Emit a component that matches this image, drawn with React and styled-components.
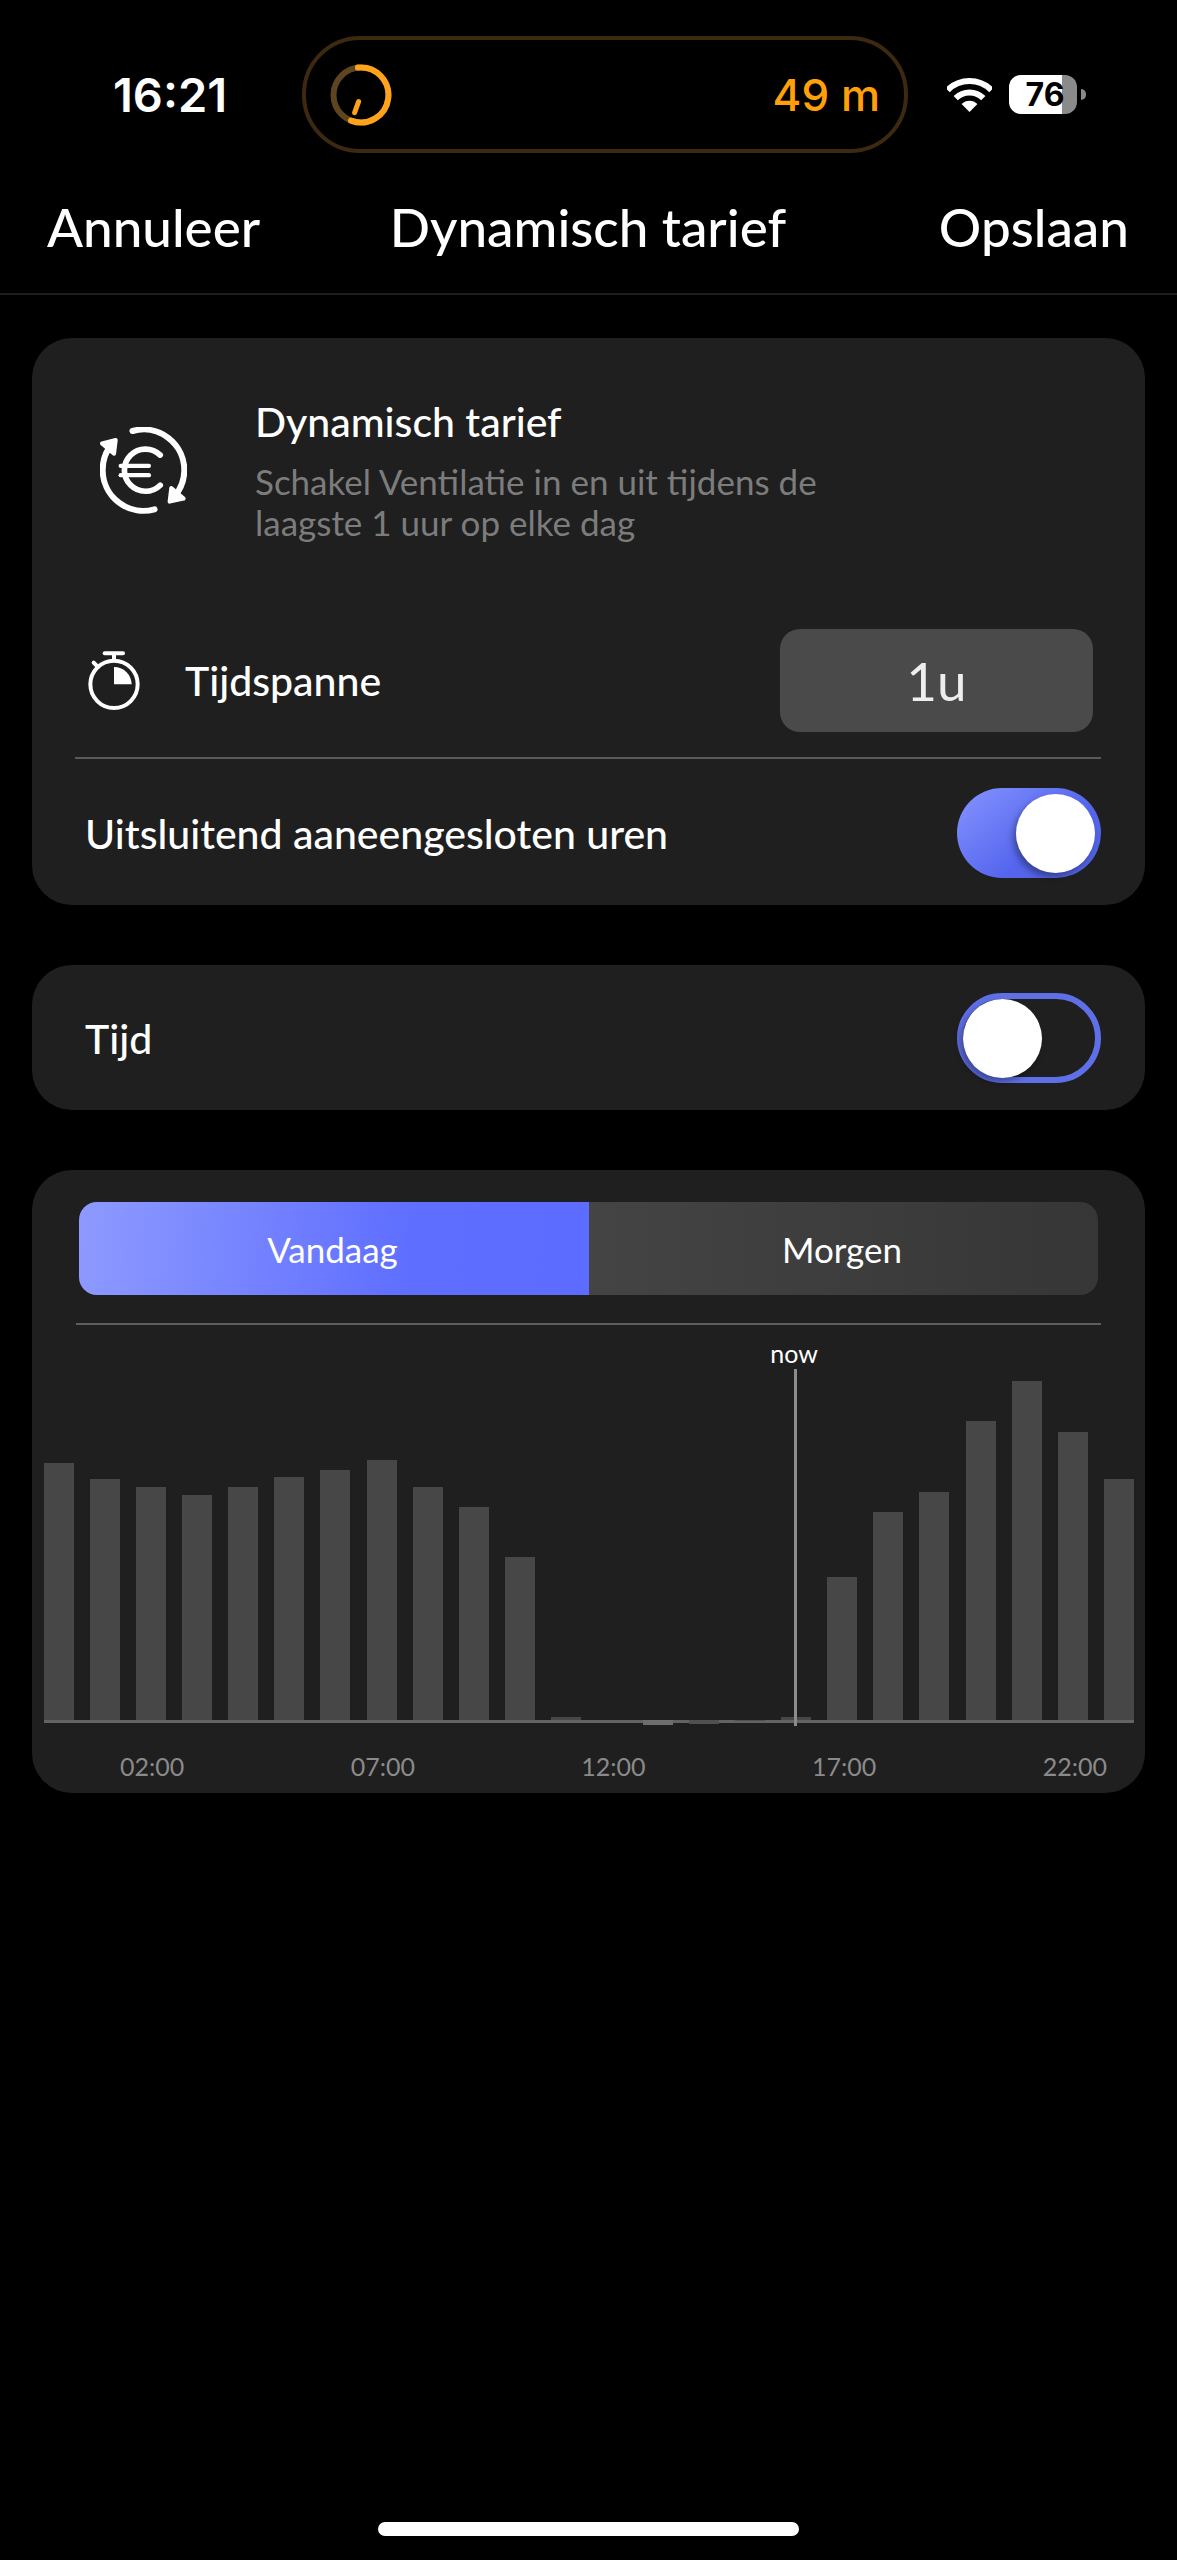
import React from "react";
import styled, { createGlobalStyle } from "styled-components";

const GlobalStyle = createGlobalStyle`
  html, body {
    margin: 0;
    padding: 0;
    background: #000;
    overflow: hidden;
  }
  body {
    font-family: "Lato", "Noto Sans", sans-serif;
    color: #fff;
  }
`;

const Page = styled.div`
  width: 1177px;
  height: 2560px;
  background: #000;
  display: flex;
  flex-direction: column;
`;

const StatusBar = styled.div`
  display: flex;
  align-items: center;
  height: 117px;
  margin-top: 36px;
  padding-left: 113px;
  font-family: "Inter", sans-serif;
`;

const Clock = styled.div`
  width: 189px;
  font-size: 47px;
  font-weight: 600;
`;

const Island = styled.div`
  box-sizing: border-box;
  width: 606px;
  height: 117px;
  border: 4px solid #3d2910;
  border-radius: 58px;
  display: flex;
  align-items: center;
  justify-content: space-between;
  padding: 0 24px 0 22px;
`;

const Countdown = styled.div`
  color: #ff9f0a;
  font-size: 44px;
  font-weight: 500;
`;

const StatusIcons = styled.div`
  display: flex;
  align-items: center;
  margin-left: 39px;
`;

const Battery = styled.div`
  position: relative;
  box-sizing: border-box;
  width: 68px;
  height: 39px;
  margin-left: 17px;
  padding-left: 4px;
  border-radius: 12px;
  background: linear-gradient(90deg, #fff 0 53px, #8a8a8a 53px);
  color: #000;
  font-size: 32px;
  font-weight: 700;
  line-height: 39px;
  text-align: center;
  &::after {
    content: "";
    position: absolute;
    right: -9px;
    top: 14px;
    width: 5px;
    height: 11px;
    border-radius: 0 5px 5px 0;
    background: #8a8a8a;
  }
`;

const NavBar = styled.div`
  display: grid;
  grid-template-columns: 1fr auto 1fr;
  align-items: center;
  height: 142px;
  padding: 6px 48px 0 47px;
  box-sizing: border-box;
  border-bottom: 2px solid #1e1e1e;
  font-size: 53px;
  font-weight: 500;
`;

const NavRight = styled.div`
  text-align: right;
`;

const Content = styled.div`
  display: flex;
  flex-direction: column;
  gap: 60px;
  padding: 43px 32px 0;
`;

const Card = styled.div`
  background: #1f1f1f;
  border-radius: 40px;
  padding: ${({ $padding }) => $padding};
`;

const Header = styled.div`
  display: flex;
  align-items: center;
  gap: 68px;
  padding: 60px 0 0 25px;
`;

const HeaderText = styled.div`
  display: flex;
  flex-direction: column;
  gap: 15px;
  max-width: 620px;
`;

const Title = styled.div`
  font-size: 41px;
  font-weight: 500;
  line-height: 48px;
`;

const Subtitle = styled.div`
  color: #7c7c7c;
  font-size: 35px;
  line-height: 41px;
`;

const SpanRow = styled.div`
  display: flex;
  align-items: center;
  margin-top: 86px;
  padding: 0 8px 0 13px;
`;

const SpanLabel = styled.div`
  flex: 1;
  margin-left: 45px;
  font-size: 41px;
  font-weight: 500;
`;

const ValueBox = styled.div`
  width: 313px;
  height: 103px;
  border-radius: 20px;
  background: #4a4a4a;
  color: #eee;
  font-size: 53px;
  line-height: 103px;
  text-align: center;
`;

const Divider = styled.div`
  height: 2px;
  background: ${({ $color }) => $color || "#5a5a5a"};
  margin: ${({ $margin }) => $margin};
`;

const ToggleRow = styled.div`
  display: flex;
  align-items: center;
  justify-content: space-between;
  padding-left: 10px;
  font-size: 41px;
  font-weight: 500;
`;

const Toggle = styled.div`
  box-sizing: border-box;
  width: 144px;
  height: 90px;
  padding: ${({ $on }) => ($on ? "6px" : "0")};
  border-radius: 45px;
  border: ${({ $on }) => ($on ? "0" : "6px solid #5f6fe8")};
  background: ${({ $on }) =>
    $on ? "linear-gradient(140deg, #8594ff 0%, #5566ee 60%, #4f5fdc 100%)" : "transparent"};
  display: flex;
  justify-content: ${({ $on }) => ($on ? "flex-end" : "flex-start")};
  align-items: center;
`;

const Knob = styled.div`
  width: 79px;
  height: 79px;
  border-radius: 50%;
  background: #fff;
  box-shadow: -3px 4px 6px rgba(0, 0, 0, 0.35);
`;

const Segments = styled.div`
  display: grid;
  grid-template-columns: 510px 509px;
  margin: 0 15px;
  height: 93px;
`;

const Segment = styled.div`
  display: flex;
  align-items: center;
  justify-content: center;
  padding-right: 3px;
  font-size: 35px;
  border-radius: ${({ $active }) => ($active ? "18px 0 0 18px" : "0 18px 18px 0")};
  background: ${({ $active }) =>
    $active
      ? "linear-gradient(95deg, #8e9aff 0%, #5e6eff 65%, #5c6cff 100%)"
      : "linear-gradient(90deg, #444 0%, #363636 100%)"};
`;

const Chart = styled.div`
  position: relative;
  display: flex;
  align-items: flex-end;
  justify-content: space-between;
  height: 395px;
  margin: 0 -21px 0 -20px;
  border-bottom: 3px solid #636363;
`;

const Bar = styled.div`
  flex: none;
  width: 30px;
  height: ${({ $value }) => Math.abs($value)}px;
  margin-bottom: ${({ $value }) => ($value < 0 ? $value : 0)}px;
  background: ${({ $value }) => ($value === -5 ? "#6e6e6e" : $value < 0 ? "#505050" : "#474747")};
`;

const NowLine = styled.div`
  position: absolute;
  left: 750px;
  top: 44px;
  bottom: -6px;
  width: 3px;
  background: #8c8c8c;
`;

const NowLabel = styled.div`
  position: absolute;
  left: 750px;
  top: 13px;
  transform: translateX(-50%);
  font-size: 25px;
  line-height: 30px;
`;

const AxisLabels = styled.div`
  display: flex;
  justify-content: space-between;
  margin: 28px 6px 0 56px;
  color: #8a8a8a;
  font-size: 25px;
  line-height: 30px;
`;

const HomeBar = styled.div`
  flex: none;
  width: 421px;
  height: 14px;
  margin: auto auto 24px;
  border-radius: 7px;
  background: #fff;
`;

const barValues = [
  257, 241, 233, 225, 233, 243, 250, 260, 233, 213, 163, 3, 0, -5, -4, -1, 3, 143, 208, 228, 299,
  339, 288, 241,
];

const axisLabels = ["02:00", "07:00", "12:00", "17:00", "22:00"];

const RingIcon = () => (
  <svg width="66" height="66" viewBox="0 0 66 66" fill="none">
    <circle cx="33" cy="33" r="27.5" stroke="#5e4520" strokeWidth="6" />
    <path
      d="M30 5.6A27.5 27.5 0 1 1 23 58.6"
      stroke="#ffa31a"
      strokeWidth="6"
      strokeLinecap="round"
    />
    <path d="M30.6 39.6L26.6 50.6" stroke="#ffa31a" strokeWidth="5" strokeLinecap="round" />
  </svg>
);

const WifiIcon = () => (
  <svg width="45" height="34" viewBox="0 0 45 34" fill="none">
    <path d="M0.6 12.1A31 31 0 0 1 44.4 12.1" stroke="#fff" strokeWidth="6" />
    <path d="M8.7 20.2A19.5 19.5 0 0 1 36.3 20.2" stroke="#fff" strokeWidth="6" />
    <path d="M22.5 34L14.6 26.1A11 11 0 0 1 30.4 26.1Z" fill="#fff" />
  </svg>
);

const EuroCycleIcon = () => (
  <svg width="87" height="87" viewBox="90 80 260 260" fill="none" stroke="#fff" strokeLinecap="round">
    <g strokeWidth="18">
      <path d="M187 92A122 122 0 0 1 342 210A122 122 0 0 1 312 288" />
      <path d="M253 326A122 122 0 0 1 98 210A122 122 0 0 1 128 128" />
    </g>
    <path d="M96 129L137 119L132 160Z" fill="#fff" strokeWidth="12" strokeLinejoin="round" />
    <path d="M340 294L298 303L303 262Z" fill="#fff" strokeWidth="12" strokeLinejoin="round" />
    <path d="M270 164A63 63 0 1 0 270 254" strokeWidth="17" />
    <g strokeWidth="13">
      <path d="M152 196H236" />
      <path d="M152 224H236" />
    </g>
  </svg>
);

const StopwatchIcon = () => (
  <svg width="52" height="60" viewBox="55 750 156 180" fill="none" stroke="#fff" strokeWidth="12">
    <circle cx="133" cy="850" r="71" />
    <path d="M105 757H160" strokeLinecap="round" />
    <path d="M133 757V778" />
    <path d="M72 785L85 798" strokeLinecap="round" />
    <path d="M133 798V850H186A53 53 0 0 0 133 798Z" fill="#fff" stroke="none" />
  </svg>
);

const App = () => {
  return (
    <Page>
      <GlobalStyle />
      <StatusBar>
        <Clock>16:21</Clock>
        <Island>
          <RingIcon />
          <Countdown>49 m</Countdown>
        </Island>
        <StatusIcons>
          <WifiIcon />
          <Battery>76</Battery>
        </StatusIcons>
      </StatusBar>

      <NavBar>
        <div>Annuleer</div>
        <div>Dynamisch tarief</div>
        <NavRight>Opslaan</NavRight>
      </NavBar>

      <Content>
        <Card $padding="0 44px 27px 43px">
          <Header>
            <EuroCycleIcon />
            <HeaderText>
              <Title>Dynamisch tarief</Title>
              <Subtitle>Schakel Ventilatie in en uit tijdens de laagste 1 uur op elke dag</Subtitle>
            </HeaderText>
          </Header>
          <SpanRow>
            <StopwatchIcon />
            <SpanLabel>Tijdspanne</SpanLabel>
            <ValueBox>1u</ValueBox>
          </SpanRow>
          <Divider $margin="25px 0 29px" />
          <ToggleRow>
            Uitsluitend aaneengesloten uren
            <Toggle $on>
              <Knob />
            </Toggle>
          </ToggleRow>
        </Card>

        <Card $padding="28px 44px 27px 43px">
          <ToggleRow>
            Tijd
            <Toggle>
              <Knob />
            </Toggle>
          </ToggleRow>
        </Card>

        <Card $padding="32px 32px 12px">
          <Segments>
            <Segment $active>Vandaag</Segment>
            <Segment>Morgen</Segment>
          </Segments>
          <Divider $margin="28px 12px 0" $color="#5e5e5e" />
          <Chart>
            {barValues.map((value, i) => (
              <Bar key={i} $value={value} />
            ))}
            <NowLabel>now</NowLabel>
            <NowLine />
          </Chart>
          <AxisLabels>
            {axisLabels.map((label) => (
              <div key={label}>{label}</div>
            ))}
          </AxisLabels>
        </Card>
      </Content>

      <HomeBar />
    </Page>
  );
};

export default App;
